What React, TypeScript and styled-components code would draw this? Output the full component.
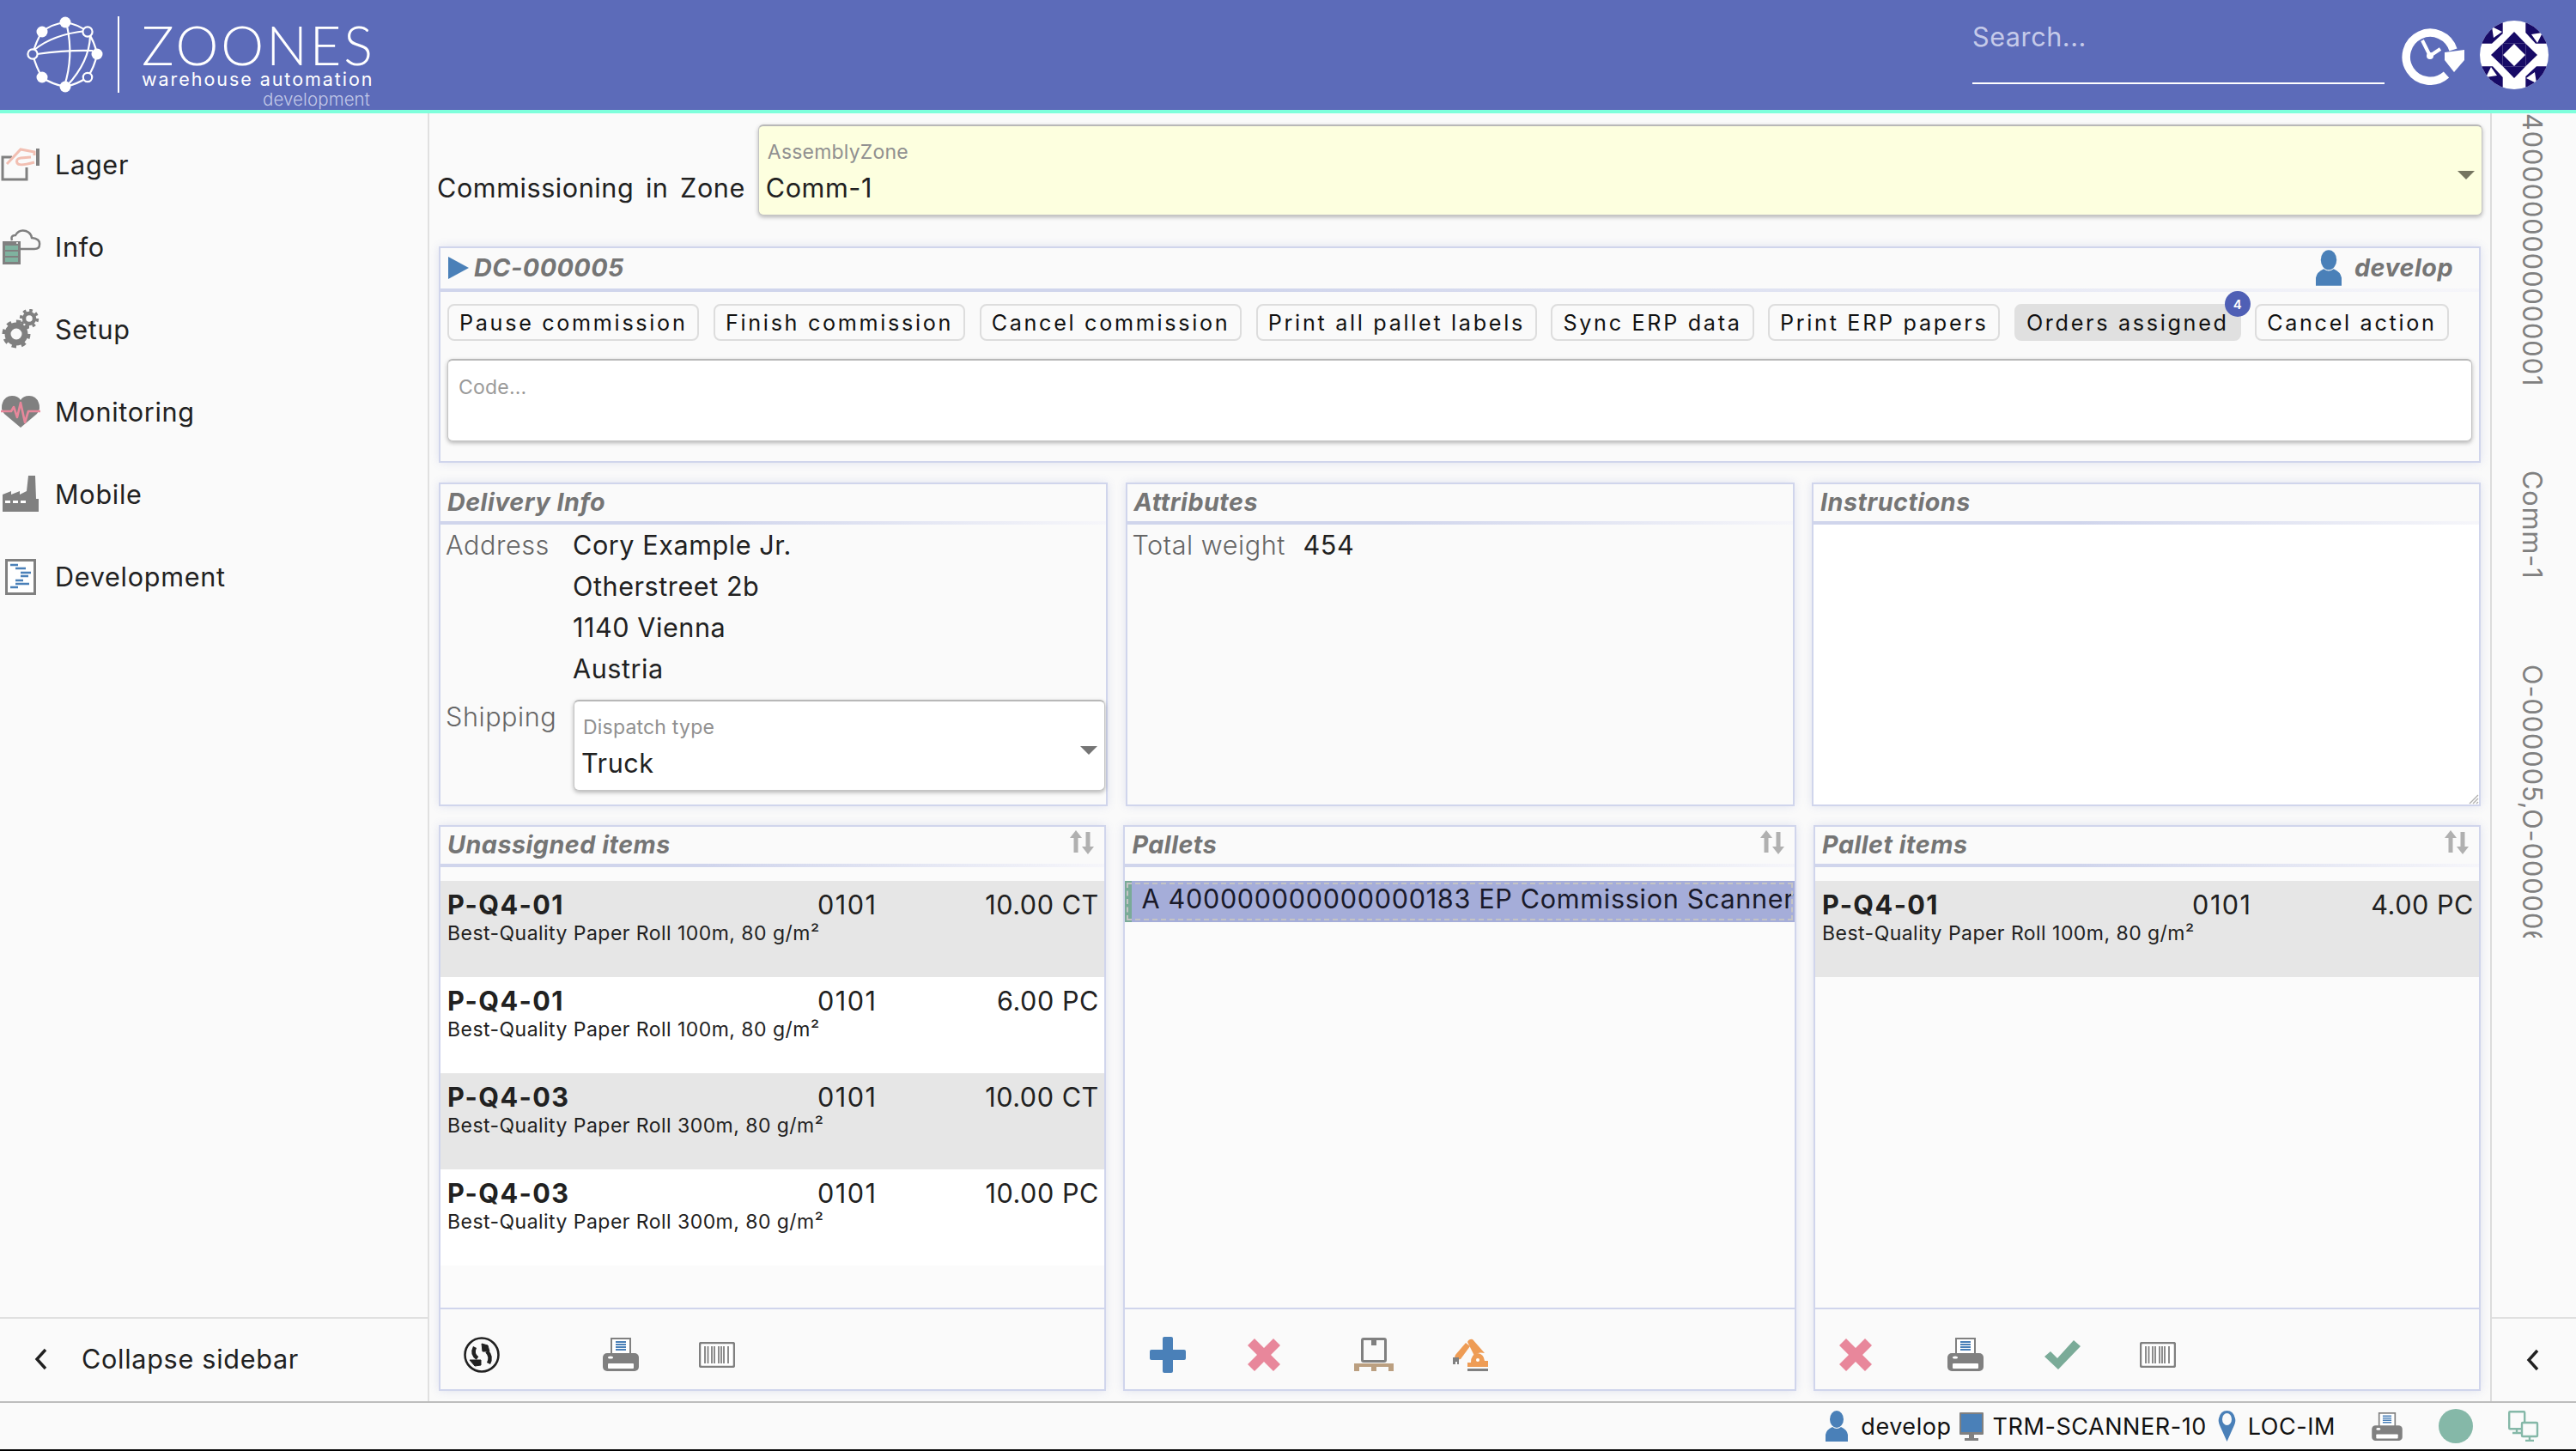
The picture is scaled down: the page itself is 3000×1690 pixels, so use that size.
import React from "react";
import styled, { createGlobalStyle } from "styled-components";

const GlobalStyle = createGlobalStyle`
    html, body {
        margin: 0;
        padding: 0;
        background: #fafafa;
        font-family: "Inter", "Liberation Sans", sans-serif;
        color: #212121;
    }
    * { box-sizing: border-box; }
`;

const Page = styled.div`
    width: 3000px;
    height: 1690px;
    display: flex;
    flex-direction: column;
    overflow: hidden;
    background: #fafafa;
    letter-spacing: 0.55px;
`;

/* ---- header ---- */

const TopBar = styled.header`
    height: 132px;
    flex: none;
    display: flex;
    align-items: flex-start;
    background: #5c6bb9;
    border-bottom: 4px solid #7fffdc;
`;

const LogoMark = styled.svg`
    width: 92px;
    height: 93px;
    margin: 17px 0 0 30px;
    flex: none;
`;

const LogoDivider = styled.div`
    width: 2px;
    height: 89px;
    margin: 19px 26px 0 15px;
    background: #fff;
`;

const LogoText = styled.div`
    width: 268px;
    display: flex;
    flex-direction: column;
    color: #fff;
`;

const LogoName = styled.div`
    font-family: "Lato", sans-serif;
    font-weight: 300;
    font-size: 63px;
    line-height: 46px;
    margin-top: 29px;
    letter-spacing: 3px;
    white-space: nowrap;
`;

const LogoTag = styled.div`
    font-size: 21.5px;
    line-height: 22px;
    margin-top: 6px;
    letter-spacing: 1.95px;
    white-space: nowrap;
`;

const LogoEnv = styled.div`
    font-size: 20.5px;
    font-weight: 300;
    line-height: 22px;
    margin-top: 2px;
    color: #c3c9e8;
    text-align: right;
    letter-spacing: 0.1px;
    padding-right: 2px;
`;

const SearchBox = styled.div`
    width: 480px;
    height: 98px;
    margin-left: auto;
    padding-top: 24px;
    font-size: 30.6px;
    line-height: 38px;
    color: #c5cae9;
    border-bottom: 2px solid #fff;
`;

const ClockIcon = styled.svg`
    width: 76px;
    height: 70px;
    margin: 29px 0 0 20px;
    flex: none;
`;

const AvatarIcon = styled.svg`
    width: 80px;
    height: 80px;
    margin: 24px 32px 0 15px;
    flex: none;
`;

/* ---- layout ---- */

const Body = styled.div`
    flex: 1;
    min-height: 0;
    display: flex;
`;

const Sidebar = styled.nav`
    width: 500px;
    flex: none;
    display: flex;
    flex-direction: column;
    border-right: 2px solid #e0e0e0;
`;

const NavList = styled.div`
    flex: 1;
    padding-top: 11px;
`;

const NavRow = styled.div`
    height: 96.1px;
    display: flex;
    align-items: center;
    font-size: 30.6px;
    letter-spacing: 0.7px;
`;

const NavIconSlot = styled.div`
    width: 64px;
    flex: none;
    display: flex;
`;

const CollapseRow = styled.div`
    height: 98px;
    flex: none;
    display: flex;
    align-items: center;
    padding: 0 0 3px 40px;
    gap: 39px;
    font-size: 30.6px;
    letter-spacing: 0.7px;
    border-top: 2px solid #e0e0e0;
`;

const Main = styled.main`
    flex: 1;
    min-width: 0;
    display: flex;
    flex-direction: column;
    padding: 13px 9px 12px 10px;
`;

const ZoneRow = styled.div`
    display: flex;
    align-items: center;
    height: 106px;
    gap: 15px;
    flex: none;
`;

const ZoneLabel = styled.div`
    font-size: 30.6px;
    word-spacing: 4.5px;
    white-space: nowrap;
    padding-top: 40px;
    margin-left: -1px;
`;

const SelectBox = styled.div<{ $tone?: "yellow" | "white" }>`
    position: relative;
    flex: 1;
    height: 106px;
    padding: 15px 10px 0 8px;
    border: 1px solid #c4c4c4;
    border-top: 2px solid #b8b8b8;
    border-radius: 6px;
    background: ${({ $tone }) => ($tone === "yellow" ? "#fdffdf" : "#fff")};
    box-shadow: 0 2px 5px rgba(0, 0, 0, 0.28);
`;

const SelectLabel = styled.div`
    font-size: 23px;
    line-height: 30px;
    letter-spacing: 0.2px;
    color: #909090;
    padding-left: 2px;
`;

const SelectValue = styled.div`
    font-size: 30.6px;
    line-height: 38px;
    margin-top: 8px;
    color: #212121;
`;

const SelectArrow = styled.div<{ $tone?: "yellow" | "white" }>`
    position: absolute;
    right: 8px;
    top: 52px;
    width: 0;
    height: 0;
    border-left: 10px solid transparent;
    border-right: 10px solid transparent;
    border-top: 10px solid ${({ $tone }) => ($tone === "yellow" ? "#757560" : "#757575")};
`;

const Panel = styled.section`
    display: flex;
    flex-direction: column;
    min-height: 0;
    background: #fafafa;
    border: 2px solid #d0d5ec;
    box-shadow: 0 0 10px rgba(92, 107, 185, 0.16);
`;

const CommissionPanel = styled(Panel)`
    height: 252px;
    margin: 36px 2px 0 1px;
    flex: none;
`;

const PanelHeader = styled.div<{ $tall?: boolean }>`
    height: ${({ $tall }) => ($tall ? 51 : 47)}px;
    flex: none;
    display: flex;
    align-items: center;
    justify-content: space-between;
    padding: 0 11px 2px 8px;
    border-bottom: 4px solid #d0d5ec;
    border-image: linear-gradient(to right, #d0d5ec 40%, #f6f6fa 100%) 1;
`;

const PanelTitle = styled.div`
    display: flex;
    align-items: center;
    gap: 6px;
    font-size: 28.7px;
    font-weight: 700;
    font-style: italic;
    letter-spacing: 0.5px;
    color: #757575;
    white-space: nowrap;
`;

const HeaderUser = styled(PanelTitle)`
    gap: 15px;
    padding-right: 19px;
`;

const ActionRow = styled.div`
    display: flex;
    gap: 16.5px;
    padding: 14px 0 0 8px;
    flex: none;
`;

const ActionButton = styled.div<{ $active?: boolean }>`
    position: relative;
    height: 43px;
    padding: 0 12px;
    display: flex;
    align-items: center;
    font-size: 25.2px;
    letter-spacing: 2.68px;
    white-space: nowrap;
    color: #111;
    border: 2px solid ${({ $active }) => ($active ? "#e0e0e0" : "#ddd")};
    border-radius: 8px;
    background: ${({ $active }) => ($active ? "#e0e0e0" : "#fafafa")};
`;

const Badge = styled.span`
    position: absolute;
    top: -17px;
    right: -13px;
    width: 30px;
    height: 30px;
    border-radius: 50%;
    background: #4f5fb5;
    color: #fff;
    font-size: 15px;
    font-weight: 600;
    letter-spacing: 0;
    display: flex;
    align-items: center;
    justify-content: center;
`;

const CodeInput = styled.div`
    margin: 21px 8px 0 8px;
    height: 96px;
    padding: 16px 12px;
    font-size: 23px;
    line-height: 30px;
    letter-spacing: 0.2px;
    color: #9a9a9a;
    background: #fff;
    border: 1px solid #c4c4c4;
    border-top: 2px solid #b8b8b8;
    border-radius: 6px;
    box-shadow: 0 2px 5px rgba(0, 0, 0, 0.28);
`;

const InfoGrid = styled.div`
    display: grid;
    grid-template-columns: repeat(3, 1fr);
    gap: 20.5px;
    height: 377px;
    margin: 23px 2px 0 1px;
    flex: none;
`;

const ListGrid = styled(InfoGrid)`
    height: 659px;
    margin-top: 22px;
`;

const InfoBody = styled.div`
    flex: 1;
    padding: 0 0 0 6px;
    font-size: 30.6px;
`;

const WhiteBody = styled.div`
    flex: 1;
    position: relative;
    background: #fff;
`;

const ResizeGrip = styled.svg`
    position: absolute;
    right: 0;
    bottom: 0;
    width: 14px;
    height: 14px;
`;

const FieldRow = styled.div`
    display: flex;
    align-items: flex-start;
`;

const ShippingRow = styled(FieldRow)`
    margin-top: 8px;
`;

const FieldLabel = styled.div<{ $width: number }>`
    width: ${({ $width }) => $width}px;
    flex: none;
    line-height: 48px;
    color: #666;
    font-weight: 300;
`;

const FieldValue = styled.div`
    line-height: 48px;
    color: #212121;
`;

const ShippingSelect = styled(SelectBox)`
    margin: 4px 1px 0 0;
`;

const ListBody = styled.div`
    flex: 1;
    min-height: 0;
    padding-top: 16px;
    background: #fbfbfb;
`;

const ItemRow = styled.div<{ $striped?: boolean }>`
    height: 112px;
    padding: 8px 6px 0 8px;
    background: ${({ $striped }) => ($striped ? "#e6e6e6" : "#fff")};
`;

const ItemTop = styled.div`
    display: grid;
    grid-template-columns: 431px 1fr auto;
    font-size: 30.6px;
    line-height: 40px;
`;

const ItemName = styled.div`
    font-weight: 700;
    letter-spacing: 1.4px;
`;

const ItemCode = styled.div`
    letter-spacing: 1.5px;
`;

const ItemDesc = styled.div`
    font-size: 23px;
    line-height: 30px;
    margin-top: -2px;
    letter-spacing: 0.46px;
`;

const PalletRow = styled.div`
    position: relative;
    height: 48px;
    padding-left: 11px;
    font-size: 30.6px;
    line-height: 42px;
    letter-spacing: 0.68px;
    color: #1a1a2a;
    white-space: nowrap;
    overflow: hidden;
    background: #a5add9;
    border-left: 8px solid #7aab98;
    outline: 2px dashed #c4c4c4;
    outline-offset: -4px;
`;

const ToolBar = styled.div<{ $lead?: number }>`
    height: 95px;
    flex: none;
    display: flex;
    align-items: center;
    border-top: 2px solid #d0d5ec;
    padding: 12px 0 0 ${({ $lead }) => $lead ?? 27}px;
`;

const ToolSlot = styled.div<{ $width: number }>`
    width: ${({ $width }) => $width}px;
    flex: none;
    display: flex;
`;

const SortIcon = styled.svg`
    width: 30px;
    height: 28px;
    flex: none;
    margin-top: -6px;
    margin-right: 0;
`;

/* ---- right rail ---- */

const Rail = styled.aside`
    width: 100px;
    flex: none;
    display: flex;
    flex-direction: column;
    border-left: 2px solid #dcdcdc;
`;

const RailTexts = styled.div`
    flex: 1;
    display: flex;
    flex-direction: column;
    align-items: center;
    overflow: hidden;
    padding-right: 4px;
`;

const RailText = styled.div<{ $gap: number; $clip: number }>`
    writing-mode: vertical-rl;
    margin-top: ${({ $gap }) => $gap}px;
    height: ${({ $clip }) => $clip}px;
    font-size: 30.6px;
    line-height: 36px;
    letter-spacing: 1px;
    color: #808080;
    white-space: nowrap;
    overflow: hidden;
`;

const RailFoot = styled.div`
    height: 98px;
    flex: none;
    display: flex;
    align-items: center;
    justify-content: center;
    padding-right: 2px;
    border-top: 2px solid #e0e0e0;
`;

/* ---- status bar ---- */

const StatusBar = styled.footer`
    height: 58px;
    flex: none;
    display: flex;
    align-items: center;
    justify-content: flex-end;
    padding-right: 43px;
    font-size: 27px;
    border-top: 2px solid #bdbdbd;
    border-bottom: 2px solid #000;
    color: #111;
`;

const StatusChunk = styled.div<{ $gap: number; $left?: number }>`
    display: flex;
    align-items: center;
    gap: ${({ $gap }) => $gap}px;
    margin-left: ${({ $left }) => $left ?? 0}px;
    white-space: nowrap;
`;

const StatusDot = styled.div`
    width: 40px;
    height: 40px;
    border-radius: 50%;
    background: #85b8a8;
`;

/* ---- drawings ---- */

const GRAY = "#808080";
const BLUE = "#4a80b8";
const PINK = "#e8879b";
const GREEN = "#7aab98";

const Logo = () => (
    <LogoMark viewBox="30 17 92 93" fill="none" stroke="#fff" strokeWidth="2.2">
        <path d="M38 63 Q42 48 49 37 Q60 28 76 26 Q90 28 102 37 Q110 48 113 63 Q110 78 102 90 Q90 98 76 101 Q60 98 49 90 Q42 78 38 63Z" />
        <path d="M40 58 Q62 40 100 36" />
        <path d="M43 63 Q78 58 108 59" />
        <path d="M78 30 Q86 66 75 100" />
        <path d="M105 42 Q104 72 78 100" />
        <g fill="#fff" stroke="none">
            <circle cx="49" cy="37" r="6.5" />
            <circle cx="76" cy="26" r="6.5" />
            <circle cx="113" cy="63" r="6.5" />
            <circle cx="76" cy="101" r="6.5" />
            <circle cx="49" cy="90" r="6.5" />
        </g>
        <g fill="#5c6bb9">
            <circle cx="102" cy="37" r="5.6" />
            <circle cx="102" cy="90" r="5.2" />
            <circle cx="38" cy="63" r="5.6" />
        </g>
    </LogoMark>
);

const HistoryClock = () => (
    <ClockIcon viewBox="0 0 76 70">
        <path d="M52 58 A28 28 0 1 1 60 29" fill="none" stroke="#fff" strokeWidth="9.5" />
        <path d="M50 32 L73 29 V41 L61 55 L50 41Z" fill="#fff" />
        <path d="M24 18 L33 36 L45 28" fill="none" stroke="#fff" strokeWidth="4" />
        <circle cx="33" cy="36" r="4" fill="#fff" />
    </ClockIcon>
);

const Avatar = () => (
    <AvatarIcon viewBox="0 0 80 80">
        <defs>
            <clipPath id="avatar-clip">
                <circle cx="40" cy="40" r="40" />
            </clipPath>
        </defs>
        <g clipPath="url(#avatar-clip)">
            <rect width="80" height="80" fill="#fff" />
            {[0, 90, 180, 270].map((angle) => (
                <g key={angle} transform={`rotate(${angle} 40 40)`} fill="#170a66">
                    <path d="M0 0 H26.7 V26.7 H0Z M14 7 L16 20 L26 13Z M26.7 26.7 H14 L26.7 15Z" fillRule="evenodd" />
                    <path d="M26.7 26.7 H53.3 L40 13Z" />
                    <path d="M26.7 26.7 H40 V40 H26.7Z M40 27 L27 40 H40Z" fillRule="evenodd" />
                </g>
            ))}
        </g>
    </AvatarIcon>
);

const LagerGlyph = () => (
    <svg width="48" height="40" viewBox="0 0 48 40" fill="none">
        <path d="M14 12 H3 V38 H31 V24" stroke={GRAY} strokeWidth="3" />
        <path d="M8 20 L24 3 L40 6 V10 M36 12 L24 13 Q18 14 20 19 Q22 23 40 18" stroke="#f2bfb2" strokeWidth="3" />
        <rect x="42" y="2" width="4" height="20" fill={GRAY} />
    </svg>
);

const InfoGlyph = () => (
    <svg width="48" height="42" viewBox="0 0 48 42" fill="none">
        <path d="M14 14 Q12 8 18 8 Q22 1 30 3 Q36 5 37 11 Q47 12 46 19 Q46 24 40 24 H24" stroke={GRAY} strokeWidth="2.5" />
        <rect x="3" y="15" width="21" height="27" fill={GRAY} />
        <rect x="6" y="20" width="15" height="5" fill="#7fb3a0" />
        <rect x="6" y="27" width="15" height="5" fill="#7fb3a0" />
        <rect x="6" y="34" width="15" height="5" fill="#7fb3a0" />
        <circle cx="20" cy="17" r="1" fill="#fff" />
    </svg>
);

const SetupGlyph = () => (
    <svg width="46" height="46" viewBox="0 0 46 46" fill="none" stroke={GRAY}>
        <circle cx="19" cy="29" r="10" strokeWidth="7" />
        <circle cx="19" cy="29" r="14.5" strokeWidth="4" strokeDasharray="5.4 5.9" />
        <circle cx="34" cy="11" r="6" strokeWidth="4.5" />
        <circle cx="34" cy="11" r="9.5" strokeWidth="3.4" strokeDasharray="3.6 3.85" />
    </svg>
);

const MonitorGlyph = () => (
    <svg width="48" height="38" viewBox="0 0 48 38" fill="none">
        <path d="M24 38 L5 22 Q0 16 3 9 Q6 1 14 1 Q21 1 24 6 Q27 1 34 1 Q42 1 45 9 Q48 16 43 22Z" fill={GRAY} />
        <path d="M1 19 H13 L16 14 L20 26 L24 9 L29 32 L33 19 H47" stroke={PINK} strokeWidth="2.6" strokeLinejoin="round" />
    </svg>
);

const FactoryGlyph = () => (
    <svg width="46" height="42" viewBox="0 0 46 42">
        <path d="M3 42 V22 L13 18 V22 L23 18 V22 L31 18 L33 0 H41 L42 27 H45 V42Z" fill={GRAY} />
        <path d="M6 29 H12 V32 H6Z M15 29 H21 V32 H15Z M24 29 H30 V32 H24Z" fill="#fff" />
    </svg>
);

const GanttGlyph = () => (
    <svg width="42" height="42" viewBox="0 0 42 42">
        <rect x="7.5" y="1.5" width="33" height="39" fill="#fff" stroke={GRAY} strokeWidth="3" />
        <path d="M12 7 H21 M18 11 H30 M24 16 H36 M24 20 H33 M18 25 H27 M18 29 H34 M12 33 H21" stroke={BLUE} strokeWidth="2.4" />
    </svg>
);

const PrinterGlyph = ({ width = 42, height = 39 }: { width?: number; height?: number }) => (
    <svg width={width} height={height} viewBox="0 0 42 39">
        <rect x="9" y="0" width="24" height="20" fill={GRAY} />
        <rect x="11" y="2" width="20" height="17" fill="#fff" />
        <path d="M15 5 H27 M15 8 H27 M15 11 H27 M15 14 H27" stroke={BLUE} strokeWidth="1.8" />
        <rect x="0" y="18" width="42" height="21" rx="5" fill={GRAY} />
        <rect x="6" y="30" width="30" height="6" rx="1" fill="#fff" />
        <ellipse cx="9" cy="23" rx="3" ry="1.6" fill="#fff" />
    </svg>
);

const BarcodeGlyph = () => (
    <svg width="42" height="30" viewBox="0 0 42 30">
        <rect x="1" y="1" width="40" height="28" rx="2" fill="#fff" stroke={GRAY} strokeWidth="2.5" />
        <path d="M7 5 V25 M10.5 5 V25 M15 5 V25 M18 5 V25 M23 5 V25 M26 5 V25 M29 5 V25 M34 5 V25" stroke={GRAY} strokeWidth="1.8" />
    </svg>
);

const SyncGlyph = () => (
    <svg width="42" height="42" viewBox="0 0 42 42" fill="none" stroke="#212121">
        <circle cx="21" cy="21" r="19.5" strokeWidth="2.6" />
        <path d="M13 12 Q9 20 16 25" strokeWidth="4.5" />
        <path d="M7 27 H20 V33 L13 34Z" fill="#212121" strokeWidth="1" />
        <path d="M29 31 Q33 23 27 17" strokeWidth="4.5" />
        <path d="M21 8 L28 10 L30 17 L22 17Z" fill="#212121" strokeWidth="1" />
    </svg>
);

const PlusGlyph = () => (
    <svg width="42" height="42" viewBox="0 0 42 42">
        <path d="M15 2 Q15 0 17 0 H25 Q27 0 27 2 V15 H40 Q42 15 42 17 V25 Q42 27 40 27 H27 V40 Q27 42 25 42 H17 Q15 42 15 40 V27 H2 Q0 27 0 25 V17 Q0 15 2 15 H15Z" fill={BLUE} />
    </svg>
);

const CrossGlyph = () => (
    <svg width="38" height="38" viewBox="0 0 38 38">
        <path d="M8 0 L19 11 L30 0 L38 8 L27 19 L38 30 L30 38 L19 27 L8 38 L0 30 L11 19 L0 8Z" fill={PINK} />
    </svg>
);

const CheckGlyph = () => (
    <svg width="42" height="34" viewBox="0 0 42 34">
        <path d="M0 19 L7 13 L15 21 L34 0 L42 7 L16 34Z" fill={GREEN} />
    </svg>
);

const PalletGlyph = () => (
    <svg width="46" height="39" viewBox="0 0 46 39">
        <rect x="9.5" y="1.5" width="27" height="26" rx="1.5" fill="none" stroke={GRAY} strokeWidth="3" />
        <rect x="20" y="1" width="6" height="8" fill={GRAY} />
        <path d="M0 30 H46 V39 H40 V34 H26 V39 H20 V34 H6 V39 H0Z" fill="#bb9f80" />
    </svg>
);

const RobotGlyph = () => (
    <svg width="42" height="38" viewBox="0 0 42 38">
        <path d="M4 19 L16 5 L21 9 L10 24 Q5 25 3 22Z" fill="#ee9c55" />
        <path d="M18 4 Q20 0 24 1 L38 17 Q30 15 26 20Z" fill="#ee9c55" />
        <path d="M18 35 V28 H22 Q22 18 30 17 Q37 18 38 26 H42 V33 H18Z" fill="#ee9c55" />
        <circle cx="30" cy="25" r="2" fill="#fff" />
        <rect x="18" y="35" width="24" height="3" fill={GRAY} />
        <path d="M1 22 H8 V30 H6 V27 H4 V30 H1Z" fill={GRAY} />
    </svg>
);

const UserGlyph = ({ width, height }: { width: number; height: number }) => (
    <svg width={width} height={height} viewBox="0 0 26 36">
        <ellipse cx="13" cy="10" rx="8" ry="10" fill={BLUE} />
        <path d="M0 36 V28 Q1 22 8 19 Q13 23 18 19 Q25 22 26 28 V36Z" fill={BLUE} />
    </svg>
);

const ScreenGlyph = () => (
    <svg width="28" height="36" viewBox="0 0 28 36">
        <rect x="0" y="2" width="28" height="26" rx="1" fill={GRAY} />
        <rect x="2" y="4" width="24" height="21" fill={BLUE} />
        <path d="M11 28 H17 V32 H22 V35 H6 V32 H11Z" fill={GRAY} />
    </svg>
);

const PinGlyph = () => (
    <svg width="21" height="36" viewBox="0 0 21 36">
        <path d="M10.5 36 L2 17 Q0 12 1 9 Q3 0 10.5 0 Q18 0 20 9 Q21 12 19 17Z" fill={BLUE} />
        <ellipse cx="10.5" cy="10" rx="5.5" ry="7" fill="#fafafa" />
    </svg>
);

const NetworkGlyph = () => (
    <svg width="36" height="36" viewBox="0 0 36 36" fill="none" stroke="#85b8a8" strokeWidth="2.4">
        <rect x="1.2" y="1.2" width="18" height="20" rx="1" fill="#fafafa" />
        <path d="M10 21 V26 M5 26 H15" />
        <rect x="16" y="14" width="18" height="16" rx="1" fill="#fafafa" />
        <path d="M25 30 V35 M20 35 H30" />
    </svg>
);

const Chevron = () => (
    <svg width="16" height="26" viewBox="0 0 16 26" fill="none">
        <path d="M13 2 L3 13 L13 24" stroke="#212121" strokeWidth="3.4" />
    </svg>
);

const SortGlyph = () => (
    <SortIcon viewBox="0 0 30 28">
        <path d="M8 0 L15 9 H10.5 V26 H5.5 V9 H1Z" fill="#b0b0b0" />
        <path d="M22 28 L15 19 H19.5 V2 H24.5 V19 H29Z" fill="#b0b0b0" />
    </SortIcon>
);

/* ---- data ---- */

const navItems = [
    { label: "Lager", icon: <LagerGlyph /> },
    { label: "Info", icon: <InfoGlyph /> },
    { label: "Setup", icon: <SetupGlyph /> },
    { label: "Monitoring", icon: <MonitorGlyph /> },
    { label: "Mobile", icon: <FactoryGlyph /> },
    { label: "Development", icon: <GanttGlyph /> },
];

const actions = [
    "Pause commission",
    "Finish commission",
    "Cancel commission",
    "Print all pallet labels",
    "Sync ERP data",
    "Print ERP papers",
    "Orders assigned",
    "Cancel action",
];

const roll100 = "Best-Quality Paper Roll 100m, 80 g/m²";
const roll300 = "Best-Quality Paper Roll 300m, 80 g/m²";

const unassigned = [
    { name: "P-Q4-01", code: "0101", qty: "10.00 CT", desc: roll100 },
    { name: "P-Q4-01", code: "0101", qty: "6.00 PC", desc: roll100 },
    { name: "P-Q4-03", code: "0101", qty: "10.00 CT", desc: roll300 },
    { name: "P-Q4-03", code: "0101", qty: "10.00 PC", desc: roll300 },
];

const palletItems = [{ name: "P-Q4-01", code: "0101", qty: "4.00 PC", desc: roll100 }];

const address = ["Cory Example Jr.", "Otherstreet 2b", "1140 Vienna", "Austria"];

type Item = (typeof unassigned)[number];

const ItemList: React.FC<{ items: Item[] }> = ({ items }) => (
    <ListBody>
        {items.map((item, index) => (
            <ItemRow key={index} $striped={index % 2 === 0}>
                <ItemTop>
                    <ItemName>{item.name}</ItemName>
                    <ItemCode>{item.code}</ItemCode>
                    <div>{item.qty}</div>
                </ItemTop>
                <ItemDesc>{item.desc}</ItemDesc>
            </ItemRow>
        ))}
    </ListBody>
);

export default function App() {
    return (
        <Page>
            <GlobalStyle />
            <TopBar>
                <Logo />
                <LogoDivider />
                <LogoText>
                    <LogoName>ZOONES</LogoName>
                    <LogoTag>warehouse automation</LogoTag>
                    <LogoEnv>development</LogoEnv>
                </LogoText>
                <SearchBox>Search...</SearchBox>
                <HistoryClock />
                <Avatar />
            </TopBar>
            <Body>
                <Sidebar>
                    <NavList>
                        {navItems.map((item) => (
                            <NavRow key={item.label}>
                                <NavIconSlot>{item.icon}</NavIconSlot>
                                {item.label}
                            </NavRow>
                        ))}
                    </NavList>
                    <CollapseRow>
                        <Chevron />
                        Collapse sidebar
                    </CollapseRow>
                </Sidebar>
                <Main>
                    <ZoneRow>
                        <ZoneLabel>Commissioning in Zone</ZoneLabel>
                        <SelectBox $tone="yellow">
                            <SelectLabel>AssemblyZone</SelectLabel>
                            <SelectValue>Comm-1</SelectValue>
                            <SelectArrow $tone="yellow" />
                        </SelectBox>
                    </ZoneRow>
                    <CommissionPanel>
                        <PanelHeader $tall>
                            <PanelTitle>
                                <svg width="25" height="28" viewBox="0 0 25 28">
                                    <path d="M1 1 L25 14 L1 27Z" fill={BLUE} />
                                </svg>
                                DC-000005
                            </PanelTitle>
                            <HeaderUser>
                                <UserGlyph width={30} height={42} />
                                develop
                            </HeaderUser>
                        </PanelHeader>
                        <ActionRow>
                            {actions.map((label) => (
                                <ActionButton key={label} $active={label === "Orders assigned"}>
                                    {label}
                                    {label === "Orders assigned" && <Badge>4</Badge>}
                                </ActionButton>
                            ))}
                        </ActionRow>
                        <CodeInput>Code...</CodeInput>
                    </CommissionPanel>
                    <InfoGrid>
                        <Panel>
                            <PanelHeader>
                                <PanelTitle>Delivery Info</PanelTitle>
                            </PanelHeader>
                            <InfoBody>
                                <FieldRow>
                                    <FieldLabel $width={148}>Address</FieldLabel>
                                    <div>
                                        {address.map((line) => (
                                            <FieldValue key={line}>{line}</FieldValue>
                                        ))}
                                    </div>
                                </FieldRow>
                                <ShippingRow>
                                    <FieldLabel $width={149}>Shipping</FieldLabel>
                                    <ShippingSelect>
                                        <SelectLabel>Dispatch type</SelectLabel>
                                        <SelectValue>Truck</SelectValue>
                                        <SelectArrow />
                                    </ShippingSelect>
                                </ShippingRow>
                            </InfoBody>
                        </Panel>
                        <Panel>
                            <PanelHeader>
                                <PanelTitle>Attributes</PanelTitle>
                            </PanelHeader>
                            <InfoBody>
                                <FieldRow>
                                    <FieldLabel $width={199}>Total weight</FieldLabel>
                                    <FieldValue>454</FieldValue>
                                </FieldRow>
                            </InfoBody>
                        </Panel>
                        <Panel>
                            <PanelHeader>
                                <PanelTitle>Instructions</PanelTitle>
                            </PanelHeader>
                            <WhiteBody>
                                <ResizeGrip viewBox="0 0 14 14">
                                    <path d="M13 3 L3 13 M13 7 L7 13 M13 11 L11 13" stroke="#b0b0b0" strokeWidth="1.4" />
                                </ResizeGrip>
                            </WhiteBody>
                        </Panel>
                    </InfoGrid>
                    <ListGrid>
                        <Panel>
                            <PanelHeader>
                                <PanelTitle>Unassigned items</PanelTitle>
                                <SortGlyph />
                            </PanelHeader>
                            <ItemList items={unassigned} />
                            <ToolBar>
                                <ToolSlot $width={162}><SyncGlyph /></ToolSlot>
                                <ToolSlot $width={112}><PrinterGlyph /></ToolSlot>
                                <ToolSlot $width={112}><BarcodeGlyph /></ToolSlot>
                            </ToolBar>
                        </Panel>
                        <Panel>
                            <PanelHeader>
                                <PanelTitle>Pallets</PanelTitle>
                                <SortGlyph />
                            </PanelHeader>
                            <ListBody>
                                <PalletRow>A 400000000000000183 EP Commission Scanner</PalletRow>
                            </ListBody>
                            <ToolBar $lead={29}>
                                <ToolSlot $width={114}><PlusGlyph /></ToolSlot>
                                <ToolSlot $width={124}><CrossGlyph /></ToolSlot>
                                <ToolSlot $width={114}><PalletGlyph /></ToolSlot>
                                <ToolSlot $width={112}><RobotGlyph /></ToolSlot>
                            </ToolBar>
                        </Panel>
                        <Panel>
                            <PanelHeader>
                                <PanelTitle>Pallet items</PanelTitle>
                                <SortGlyph />
                            </PanelHeader>
                            <ItemList items={palletItems} />
                            <ToolBar $lead={28}>
                                <ToolSlot $width={126}><CrossGlyph /></ToolSlot>
                                <ToolSlot $width={113}><PrinterGlyph /></ToolSlot>
                                <ToolSlot $width={111}><CheckGlyph /></ToolSlot>
                                <ToolSlot $width={112}><BarcodeGlyph /></ToolSlot>
                            </ToolBar>
                        </Panel>
                    </ListGrid>
                </Main>
                <Rail>
                    <RailTexts>
                        <RailText $gap={0} $clip={318}>4000000000000001</RailText>
                        <RailText $gap={98} $clip={126}>Comm-1</RailText>
                        <RailText $gap={100} $clip={318}>O-000005,O-000006</RailText>
                    </RailTexts>
                    <RailFoot>
                        <Chevron />
                    </RailFoot>
                </Rail>
            </Body>
            <StatusBar>
                <StatusChunk $gap={15}>
                    <UserGlyph width={26} height={36} />
                    develop
                </StatusChunk>
                <StatusChunk $gap={11} $left={9}>
                    <ScreenGlyph />
                    TRM-SCANNER-10
                </StatusChunk>
                <StatusChunk $gap={14} $left={13}>
                    <PinGlyph />
                    LOC-IM
                </StatusChunk>
                <StatusChunk $gap={0} $left={42}>
                    <PrinterGlyph width={36} height={33} />
                </StatusChunk>
                <StatusChunk $gap={0} $left={42}>
                    <StatusDot />
                </StatusChunk>
                <StatusChunk $gap={0} $left={41}>
                    <NetworkGlyph />
                </StatusChunk>
            </StatusBar>
        </Page>
    );
}
